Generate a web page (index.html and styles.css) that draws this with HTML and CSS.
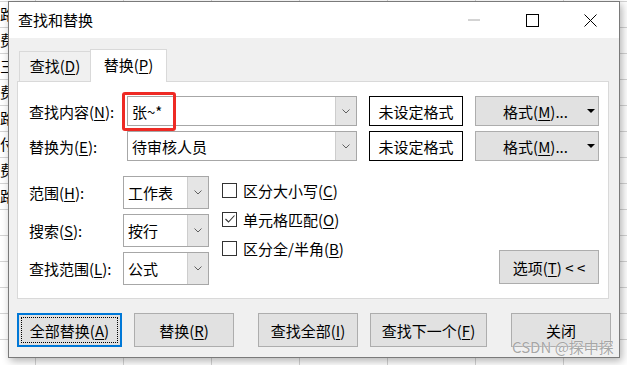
FILE: index.html
```html
<!DOCTYPE html>
<html>
<head>
  <meta charset="utf-8">
  <title>查找和替换</title>
  <link rel="stylesheet" href="styles.css">
</head>
<body>

<!-- 对话框后面的表格 -->
<div class="sheet">
  <div class="rowhead">
    <div>路</div><div>费</div><div>三</div><div>费</div>
    <div>路</div><div>付</div><div>费</div><div>路</div>
  </div>
</div>

<div class="dialog">
  <div class="titlebar">
    <span class="title">查找和替换</span>
    <span class="ctrl ctrl-first">
      <svg width="12" height="2" viewBox="0 0 12 2"><line x1="0" y1="1" x2="12" y2="1" stroke="#a8a8a8" stroke-width="1"/></svg>
    </span>
    <span class="ctrl">
      <svg width="13" height="13" viewBox="0 0 13 13"><rect x="0.5" y="0.5" width="12" height="12" fill="none" stroke="#000" stroke-width="1"/></svg>
    </span>
    <span class="ctrl">
      <svg width="13" height="13" viewBox="0 0 13 13"><path d="M0.5 0.5 L12.5 12.5 M12.5 0.5 L0.5 12.5" stroke="#000" stroke-width="1"/></svg>
    </span>
  </div>

  <div class="tabs">
    <div class="tab">查找(<u>D</u>)</div>
    <div class="tab active">替换(<u>P</u>)</div>
  </div>

  <div class="panel">
    <div class="line">
      <label class="lbl">查找内容(<u>N</u>):</label>
      <div class="combo wide">
        <span class="val">张~*</span>
        <span class="drop"><svg width="8" height="5" viewBox="0 0 8 5"><polyline points="0.5,0.5 4,4 7.5,0.5" fill="none" stroke="#606060"/></svg></span>
      </div>
      <div class="preview">未设定格式</div>
      <button class="btn fmt"><span></span><span>格式(<u>M</u>)...</span><span class="tri"></span></button>
    </div>
    <div class="line second">
      <label class="lbl">替换为(<u>E</u>):</label>
      <div class="combo wide">
        <span class="val">待审核人员</span>
        <span class="drop"><svg width="8" height="5" viewBox="0 0 8 5"><polyline points="0.5,0.5 4,4 7.5,0.5" fill="none" stroke="#606060"/></svg></span>
      </div>
      <div class="preview">未设定格式</div>
      <button class="btn fmt"><span></span><span>格式(<u>M</u>)...</span><span class="tri"></span></button>
    </div>

    <div class="opts">
      <div class="col-left">
        <div class="pair">
          <label class="lbl2">范围(<u>H</u>):</label>
          <div class="combo small">
            <span class="val">工作表</span>
            <span class="drop"><svg width="8" height="5" viewBox="0 0 8 5"><polyline points="0.5,0.5 4,4 7.5,0.5" fill="none" stroke="#606060"/></svg></span>
          </div>
        </div>
        <div class="pair">
          <label class="lbl2">搜索(<u>S</u>):</label>
          <div class="combo small">
            <span class="val">按行</span>
            <span class="drop"><svg width="8" height="5" viewBox="0 0 8 5"><polyline points="0.5,0.5 4,4 7.5,0.5" fill="none" stroke="#606060"/></svg></span>
          </div>
        </div>
        <div class="pair">
          <label class="lbl2">查找范围(<u>L</u>):</label>
          <div class="combo small">
            <span class="val">公式</span>
            <span class="drop"><svg width="8" height="5" viewBox="0 0 8 5"><polyline points="0.5,0.5 4,4 7.5,0.5" fill="none" stroke="#606060"/></svg></span>
          </div>
        </div>
      </div>

      <div class="checks">
        <div class="chk"><span class="box"></span>区分大小写(<u>C</u>)</div>
        <div class="chk"><span class="box"><svg width="12" height="12" viewBox="0 0 12 12"><polyline points="1.5,6 4.5,9 10.5,2.5" fill="none" stroke="#333" stroke-width="1.1"/></svg></span>单元格匹配(<u>O</u>)</div>
        <div class="chk"><span class="box"></span>区分全/半角(<u>B</u>)</div>
      </div>

      <button class="btn more">选项(<u>T</u>) &lt; &lt;</button>
    </div>
  </div>

  <div class="actions">
    <button class="btn act default">全部替换(<u>A</u>)</button>
    <button class="btn act">替换(<u>R</u>)</button>
    <button class="btn act far">查找全部(<u>I</u>)</button>
    <button class="btn act next">查找下一个(<u>F</u>)</button>
    <button class="btn act far">关闭</button>
  </div>
</div>

<!-- 截图上的标注和水印 -->
<div class="redbox"></div>
<div class="mark">CSDN @探中探</div>

</body>
</html>
```

FILE: styles.css
```css
/* 全局 */
* {
  box-sizing: border-box;
}

body {
  margin: 0;
  width: 627px;
  height: 365px;
  overflow: hidden;
  position: relative;
  font-family: "Microsoft YaHei UI", "Noto Sans CJK SC", sans-serif;
  font-size: 15px;
  color: #000;
  background: #fff;
}

u {
  text-underline-offset: 2px;
}

/* 背景表格 */
.sheet {
  width: 627px;
  height: 365px;
  background-color: #fff;
  background-image:
    linear-gradient(to right, #d4d4d4 1px, transparent 1px),
    linear-gradient(to bottom, #d4d4d4 1px, transparent 1px);
  background-size: 88px 100%, 100% 26px;
  background-position: 35px 0, 0 1px;
}

.rowhead div {
  height: 26px;
  line-height: 26px;
  padding-top: 1px;
}

/* 对话框 */
.dialog {
  position: absolute;
  left: 8px;
  top: 1px;
  width: 612px;
  height: 357px;
  border: 1px solid #7a7a7a;
  background: #f0f0f0;
  box-shadow: 2px 3px 8px rgba(0, 0, 0, 0.3);
}

.titlebar {
  display: flex;
  align-items: center;
  height: 36px;
  padding-left: 9px;
  background: #fff;
}

.title {
  line-height: 20px;
}

.ctrl {
  width: 58px;
  height: 36px;
  display: flex;
  align-items: center;
  justify-content: center;
}

.ctrl-first {
  margin-left: auto;
}

/* 选项卡 */
.tabs {
  display: flex;
  align-items: flex-end;
  height: 32px;
  margin-top: 11px;
  padding-left: 10px;
}

.tab {
  width: 72px;
  height: 30px;
  line-height: 28px;
  text-align: center;
  border: 1px solid #d9d9d9;
  border-bottom: 0;
  background: #f0f0f0;
}

.tab.active {
  width: 77px;
  height: 33px;
  margin-left: -1px;
  margin-bottom: -1px;
  line-height: 30px;
  background: #fff;
  position: relative;
  z-index: 1;
}

.panel {
  width: 592px;
  height: 218px;
  margin-left: 8px;
  padding: 14px 9px 0 11px;
  background: #fff;
  border: 1px solid #d9d9d9;
}

.line {
  display: flex;
  align-items: center;
  height: 30px;
}

.line.second {
  margin-top: 5px;
}

.lbl {
  width: 98px;
}

/* 下拉框 */
.combo {
  display: flex;
  height: 30px;
  border: 1px solid #a7a7a7;
  background: #fff;
}

.combo.wide {
  width: 230px;
}

.combo.small {
  width: 86px;
  height: 33px;
}

.val {
  flex: 1;
  padding-left: 4px;
  display: flex;
  align-items: center;
}

.drop {
  width: 21px;
  display: flex;
  align-items: center;
  justify-content: center;
  background: #e5e5e5;
  border-left: 1px solid #cdcdcd;
}

.preview {
  width: 94px;
  height: 30px;
  margin-left: 12px;
  border: 1px solid #000;
  background: #fff;
  display: flex;
  align-items: center;
  justify-content: center;
}

/* 按钮 */
.btn {
  font: inherit;
  color: #000;
  background: #e1e1e1;
  border: 1px solid #adadad;
  padding: 0;
  margin: 0;
}

.fmt {
  width: 124px;
  height: 30px;
  margin-left: 12px;
  padding: 0 3px 0 0;
  display: grid;
  grid-template-columns: 12px 1fr 12px;
  align-items: center;
}

.tri {
  justify-self: end;
  width: 0;
  height: 0;
  border-left: 4px solid transparent;
  border-right: 4px solid transparent;
  border-top: 4px solid #000;
}

.opts {
  display: flex;
  margin-top: 15px;
}

.col-left {
  display: flex;
  flex-direction: column;
  gap: 5px;
}

.pair {
  display: flex;
  align-items: center;
  height: 33px;
}

.lbl2 {
  width: 94px;
}

.checks {
  display: flex;
  flex-direction: column;
  gap: 1px;
  margin-left: 13px;
}

.chk {
  display: flex;
  align-items: center;
  height: 28px;
}

.box {
  width: 15px;
  height: 15px;
  margin-right: 6px;
  border: 1px solid #333;
  background: #fff;
  display: flex;
  align-items: center;
  justify-content: center;
}

.more {
  width: 100px;
  height: 34px;
  margin-left: auto;
  margin-top: 74px;
  align-self: flex-start;
}

/* 底部按钮 */
.actions {
  display: flex;
  margin-top: 14px;
  padding-left: 8px;
}

.act {
  width: 100px;
  height: 34px;
  margin-left: 12px;
}

.act.default {
  width: 105px;
  margin-left: 0;
  border: 2px solid #0078d7;
  outline: 1px dotted #000;
  outline-offset: -5px;
}

.act.far {
  margin-left: 24px;
}

.act.next {
  width: 117px;
}

/* 红框标注 */
.redbox {
  position: absolute;
  left: 122px;
  top: 92px;
  width: 54px;
  height: 39px;
  border: 3px solid #ee2a24;
  border-radius: 3px;
}

/* 水印 */
.mark {
  position: absolute;
  left: 512px;
  top: 338px;
  line-height: 18px;
  font-size: 15px;
  color: rgba(150, 150, 150, 0.85);
  text-shadow: 0 0 1px #fff;
}
```
